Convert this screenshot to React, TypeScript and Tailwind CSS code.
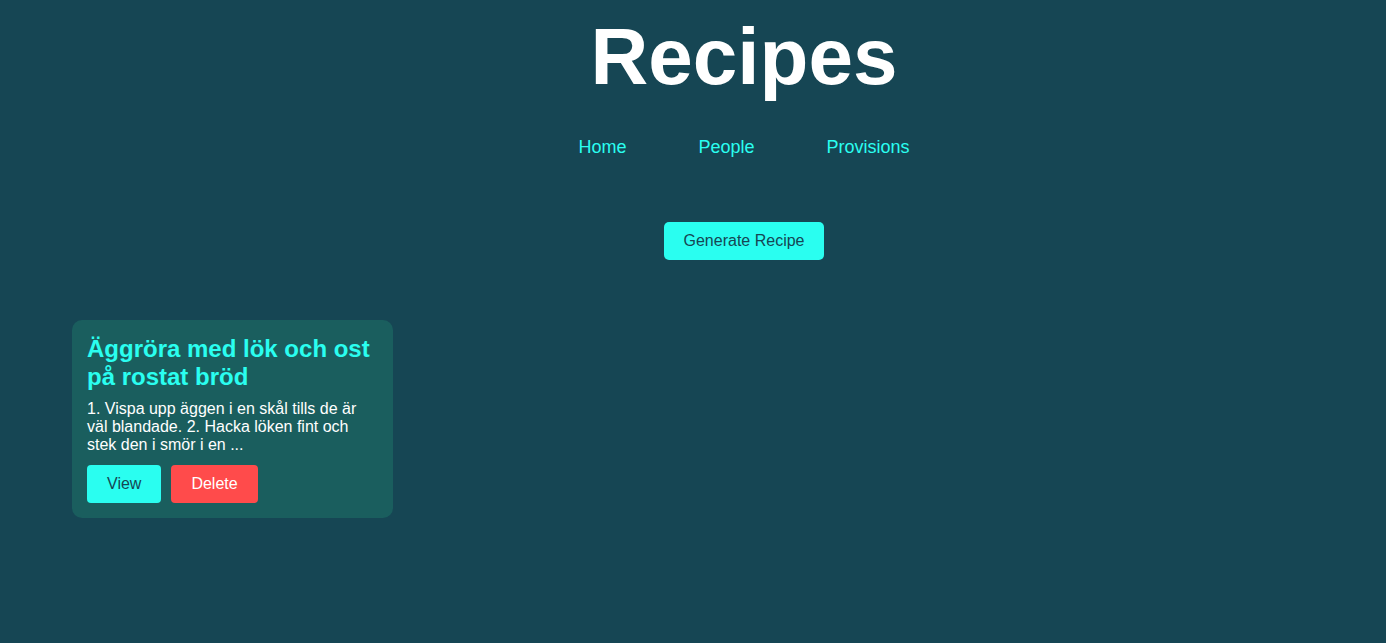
export default function App() {
  return (
    <div className="min-h-[643px] w-full bg-[#164654] font-['Liberation_Sans',Arial,sans-serif]">
      <div className="flex flex-col items-center pl-[102px] pt-[11px]">
        <h1 className="text-[80px] leading-[92px] font-bold text-white">Recipes</h1>
        <nav className="mt-[34px] flex gap-[72px] text-[18px] leading-[21px] text-[#2afef0]">
          <a href="#">Home</a>
          <a href="#">People</a>
          <a href="#">Provisions</a>
        </nav>
        <button className="mt-[64px] h-[38px] rounded-[5px] bg-[#2afef0] px-5 text-[16px] text-[#164654]">
          Generate Recipe
        </button>
      </div>
      <div className="mt-[60px] flex px-[72px]">
        <div className="w-[321px] rounded-[10px] bg-[#1a5e5e] p-[15px]">
          <h2 className="text-[24px] leading-[28px] font-bold text-[#2afef0]">
            Äggröra med lök och ost på rostat bröd
          </h2>
          <p className="mt-[9px] text-[16px] leading-[18px] text-white">
            1. Vispa upp äggen i en skål tills de är väl blandade. 2. Hacka löken fint och stek den i smör i en ...
          </p>
          <div className="mt-[11px] flex gap-[10px]">
            <button className="h-[38px] rounded-[4px] bg-[#2afef0] px-5 text-[16px] text-[#164654]">View</button>
            <button className="h-[38px] rounded-[4px] bg-[#ff4b4b] px-5 text-[16px] text-white">Delete</button>
          </div>
        </div>
      </div>
    </div>
  );
}
